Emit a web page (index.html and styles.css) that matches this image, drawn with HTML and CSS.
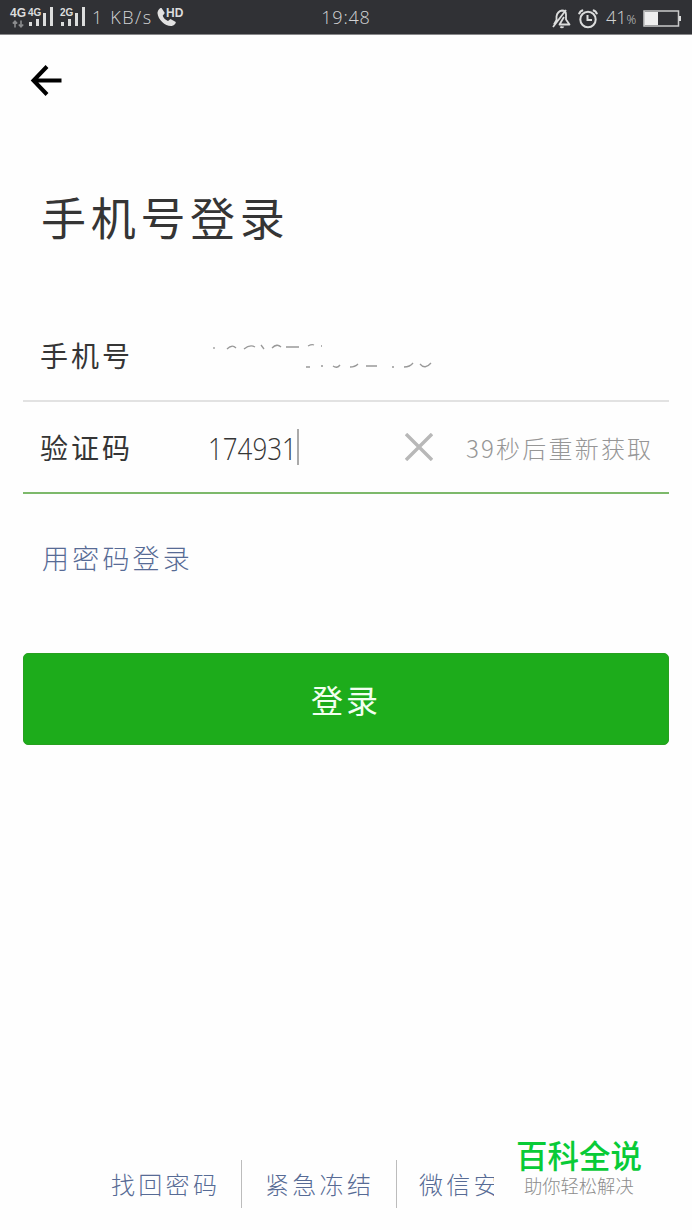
FILE: index.html
```html
<!DOCTYPE html>
<html lang="zh-CN">
<head>
<meta charset="utf-8">
<title>手机号登录</title>
<link rel="stylesheet" href="styles.css">
</head>
<body>
<div class="screen">
  <header class="status">
    <div class="status-left">
      <div class="net"><b>4G</b>
        <svg width="12" height="8" viewBox="0 0 12 8" fill="none" stroke="#8b8c8e" stroke-width="1.6"><path d="M3 7.5V1.5M.8 3.5 3 1.2l2.200 2.300M9 .5v6M6.800 4.500 9 6.800l2.200-2.300"/></svg>
      </div>
      <div class="signal"><b>4G</b>
        <svg width="26" height="20" viewBox="0 0 26 20" fill="#dcdddd"><path d="M1 15h3v4H1zM8 12h3v7H8zM15 6h3v13h-3zM22 0h3v19h-3z"/></svg>
      </div>
      <div class="signal second"><b>2G</b>
        <svg width="26" height="20" viewBox="0 0 26 20" fill="#dcdddd"><path d="M1 15h3v4H1zM8 12h3v7H8zM15 6h3v13h-3zM22 0h3v19h-3z"/></svg>
      </div>
      <span class="rate">1 KB/s</span>
      <svg class="call" width="20" height="20" viewBox="0 0 20 20" fill="#e2e2e2"><path d="M4.500 1 7.800 6 5.700 8.700c1 2.500 2.800 4.200 5.300 5.300l2.500-2 5.300 3c.2 1.500-2 4-4.800 4C8 19 1 12.500.5 6.200.5 3.700 2.500.8 4.500 1z"/></svg>
      <b class="hd">HD</b>
    </div>
    <span class="clock">19:48</span>
    <div class="status-right">
      <svg width="19" height="20" viewBox="0 0 19 20" fill="none" stroke="#dcdddd" stroke-width="1.800" stroke-linejoin="round"><path d="M2 15.500 4.500 11V7.500C5 4.500 7 2 10 1.500 12.500 1.500 14 3 14 5.500V10.500l3.500 5H7.500L12 8M1 18 14 1M8.500 17.500c.6 1.200 2.500 1.200 3 0"/></svg>
      <svg class="alarm" width="20" height="20" viewBox="0 0 20 20" fill="none" stroke="#dcdddd" stroke-width="2"><circle cx="10" cy="10.500" r="7.700"/><path d="M9.500 6v5H14M1 5.200C1.500 3.200 3 1.600 5.200 1.200M19 5.200C18.500 3.200 17 1.600 14.800 1.200"/></svg>
      <span class="percent">41<small>%</small></span>
      <svg class="battery" width="39" height="18" viewBox="0 0 39 18"><rect x="1" y="1" width="34.500" height="15" fill="none" stroke="#c9caca" stroke-width="1.500"/><path fill="#eee" d="M1.500 2H15v13H1.500z"/><path fill="#dcdddd" d="M36 6h2v5h-2z"/></svg>
    </div>
  </header>

  <nav class="toolbar">
    <svg width="32" height="32" viewBox="0 0 32 32" fill="none" stroke="#000" stroke-width="4"><path d="M31.500 15.500H4M17 1.500 3.500 15.500l13.500 14"/></svg>
  </nav>

  <main class="content">
    <h1>手机号登录</h1>

    <section class="field">
      <label>手机号</label>
      <svg class="masked" width="226" height="30" viewBox="0 0 226 30" fill="none" stroke="#999" stroke-width="1.300"><path d="M7 6v2M20 8q5-5 9-1M37 8q6-5 11-2M54 4l3 4M65 7q5-5 9-1M79 6h13M101 5q4-2 6-1M114 5h1M99 26h4M114 25h2M126 25q4 3 7-1M143 26q5 0 8-3M159 25h11M185 26h2M197 26q6 0 9-4M213 23q5 6 11-1"/></svg>
    </section>

    <section class="field active">
      <label>验证码</label>
      <span class="code"><span>174931</span></span><i class="caret"></i>
      <svg class="clear" width="28" height="28" viewBox="0 0 28 28" fill="none" stroke="#b8b8b8" stroke-width="3.400"><path d="m1 1 26 26M27 1 1 27"/></svg>
      <span class="resend">39秒后重新获取</span>
    </section>

    <a class="alternate">用密码登录</a>
    <button class="submit">登录</button>
  </main>

  <footer class="footer">
    <a>找回密码</a>
    <a>紧急冻结</a>
    <a class="cut">微信安</a>
    <div class="brand"><strong>百科全说</strong><span>助你轻松解决</span></div>
  </footer>
</div>
</body>
</html>
```
FILE: styles.css
```css
* { box-sizing: border-box; }
body { margin: 0; background: #fefefe; color: #353535; font-family: "Noto Sans CJK SC", sans-serif; font-weight: 300; }
svg { display: block; flex: none; }
.screen { width: 692px; height: 1230px; display: flex; flex-direction: column; overflow: hidden; }

.status { height: 35px; flex: none; display: grid; grid-template-columns: 1fr 50px 1fr; background: #303135; border-bottom: 1px solid #88888a; color: #d2d3d4; line-height: 34px; white-space: nowrap; }
.status b { font: bold 11px/11px "Liberation Sans", sans-serif; color: #dcdddd; }
.status-left { display: flex; padding-left: 10px; }
.net { width: 18px; padding-top: 8px; display: flex; flex-direction: column; gap: 1px; }
.net svg { margin-left: 2px; }
.status .net b { font-size: 12px; }
.signal { width: 26px; height: 27px; display: grid; margin-right: 6px; }
.signal > * { grid-area: 1 / 1; }
.signal svg { align-self: end; }
.status .signal b { font-size: 10px; padding-top: 7px; }
.rate { width: 65px; font-family: "Open Sans", sans-serif; font-size: 18px; letter-spacing: 1.600px; }
.call { margin-top: 7px; }
.status .hd { font-size: 12px; margin: 8px 0 0 -11px; }
.clock { font-family: "Open Sans", sans-serif; font-size: 18px; text-align: center; letter-spacing: .8px; }
.status-right { display: flex; align-items: center; justify-content: flex-end; padding-right: 10px; }
.alarm { margin-left: 7px; }
.percent { width: 30px; margin-left: 8px; font-family: "Open Sans", sans-serif; font-size: 18px; }
.percent small { font-size: 12px; }
.battery { margin-left: 7px; }

.toolbar { height: 92px; padding: 30px 0 0 30px; flex: none; }
.content { padding: 0 23px; flex: 1; }
h1 { margin: 58px 0 0 18px; height: 65px; font-size: 45px; line-height: 64px; font-weight: 400; letter-spacing: 4.700px; }
.field { height: 92px; padding-left: 17px; display: flex; align-items: center; border-bottom: 2px solid #e2e2e2; }
h1 + .field { margin-top: 60px; }
.field label { width: 168px; font-size: 28px; font-weight: 400; letter-spacing: 3px; white-space: nowrap; }
.masked { margin-left: -1px; margin-top: 2px; }
.active { border-color: #7db96b; }
.code { width: 89px; font-family: "Open Sans", sans-serif; font-size: 32px; white-space: nowrap; }
.code span { display: inline-block; transform: scaleX(.81); transform-origin: 0 50%; }
.caret { width: 2px; height: 36px; background: #aaa; }
.clear { margin-left: 106px; }
.resend { margin-left: 33px; font-size: 24px; letter-spacing: 2.200px; color: #969696; white-space: nowrap; }
.alternate { display: block; margin: 44px 0 0 19px; height: 40px; font-size: 27px; line-height: 40px; letter-spacing: 3.200px; color: #576b95; }
.submit { display: block; width: 646px; height: 92px; margin-top: 75px; padding: 0; border: 1px solid #28a020; border-radius: 5px; background: #1dac1b; color: #f2fff0; font: 400 32px/88px "Noto Sans CJK SC", sans-serif; letter-spacing: 3px; }

.footer { height: 102px; flex: none; display: flex; align-items: flex-start; padding: 32px 0 0 111px; }
.footer a { height: 48px; line-height: 48px; font-size: 24px; letter-spacing: 3.300px; color: #576b95; white-space: nowrap; }
.footer a:nth-child(1) { width: 131px; border-right: 1px solid #bcbcbc; }
.footer a:nth-child(2) { width: 155px; padding-left: 23px; border-right: 1px solid #bcbcbc; }
.footer .cut { width: 97px; padding-left: 22px; overflow: hidden; }
.brand { margin: -26px 0 0 22px; display: flex; flex-direction: column; white-space: nowrap; }
.brand strong { font-size: 31.500px; line-height: 40px; font-weight: 500; color: #08cb37; }
.brand span { padding-left: 8px; font-size: 18.300px; line-height: 22px; color: #8c8c8c; }
```
